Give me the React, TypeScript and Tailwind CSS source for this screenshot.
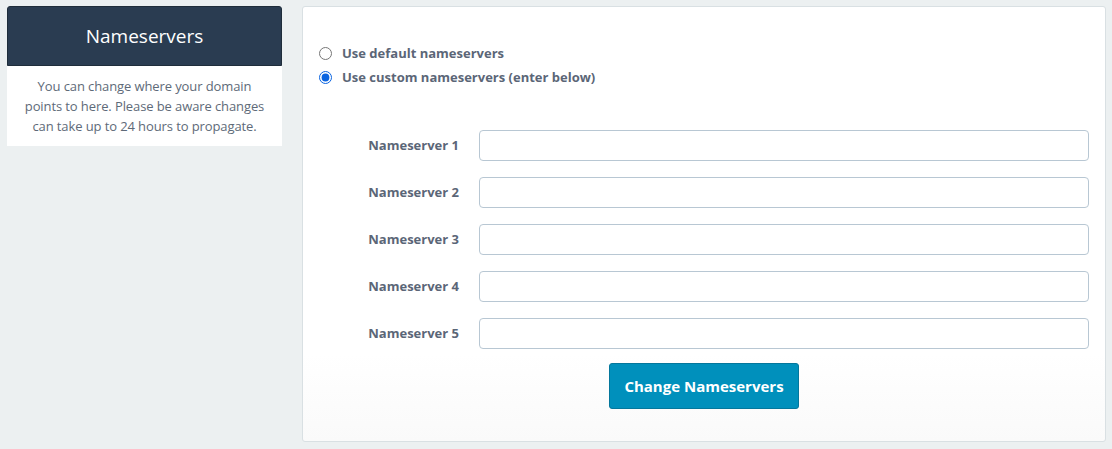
import { useState } from 'react';

const servers = [1, 2, 3, 4, 5];

export default function App() {
  const [mode, setMode] = useState<'default' | 'custom'>('custom');

  return (
    <div
      className="flex min-h-screen items-start gap-5 bg-[#ecf0f1] pl-[7px] pr-[6px] pt-[6px] text-[13px] text-[#58666e]"
      style={{ fontFamily: '"Open Sans", "Liberation Sans", sans-serif' }}
    >
      {/* Sidebar */}
      <div className="w-[275px] shrink-0">
        <div className="flex h-[60px] items-center justify-center rounded-t-[3px] border border-[#1f2d3b] bg-[#2a3c51]">
          <h2 className="text-[19px] font-normal text-white">Nameservers</h2>
        </div>
        <div className="bg-white px-[14px] pb-[10px] pt-[10px] text-center leading-[20px] tracking-[-0.1px] text-[#5e6a78]">
          You can change where your domain points to here. Please be aware changes can take up to 24 hours to propagate.
        </div>
      </div>

      {/* Main panel */}
      <div className="flex h-[436px] flex-1 flex-col rounded-[3px] border border-[#d9e0e3] bg-gradient-to-b from-white from-80% to-[#fafafa] pl-4 pr-4 pt-[37px]">
        <div className="flex flex-col gap-[5px] font-bold text-[#5b6677]">
          <label className="flex h-[19px] items-center gap-[10px]">
            <input
              type="radio"
              name="ns"
              checked={mode === 'default'}
              onChange={() => setMode('default')}
              className="m-0 h-[13px] w-[13px] accent-[#0a64e0]"
            />
            Use default nameservers
          </label>
          <label className="flex h-[19px] items-center gap-[10px]">
            <input
              type="radio"
              name="ns"
              checked={mode === 'custom'}
              onChange={() => setMode('custom')}
              className="m-0 h-[13px] w-[13px] accent-[#0a64e0]"
            />
            Use custom nameservers (enter below)
          </label>
        </div>

        <div className="mt-[43px] flex flex-col gap-4">
          {servers.map((n) => (
            <div key={n} className="flex items-center gap-5">
              <label className="w-[140px] text-right font-bold text-[#5b6677]">Nameserver {n}</label>
              <input
                type="text"
                className="h-[31px] flex-1 rounded-[4px] border border-[#b8c7d3] bg-white px-3 outline-none"
              />
            </div>
          ))}
        </div>

        <div className="mt-[14px] flex justify-center">
          <button
            type="button"
            className="h-[46px] w-[190px] rounded-[3px] border border-[#04779c] bg-[#0090bc] text-[15px] font-bold text-white"
          >
            Change Nameservers
          </button>
        </div>
      </div>
    </div>
  );
}
